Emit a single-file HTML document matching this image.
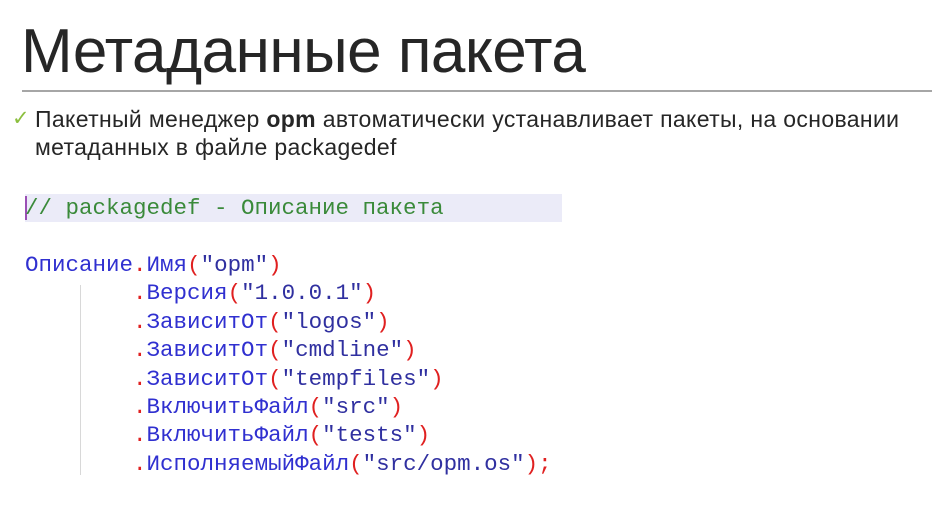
<!DOCTYPE html>
<html><head><meta charset="utf-8"><style>
body{margin:0;width:932px;height:510px;background:#fff;overflow:hidden;position:relative;font-family:"Liberation Sans","DejaVu Sans",sans-serif}
.t{position:absolute;left:21px;top:16px;font-size:62px;color:#262626;white-space:nowrap;letter-spacing:-0.5px}
.hr{position:absolute;left:22px;top:90px;width:910px;height:2px;background:#a6a6a6}
.b{position:absolute;left:35px;top:105px;font-size:23px;line-height:28px;color:#262626;width:890px;letter-spacing:0.35px}
.ck{position:absolute;left:12px;top:106px;color:#8cbf3f;font-size:21px}
.hl{position:absolute;left:25px;top:194px;width:537px;height:28px;background:#ebebf8}
.cur{position:absolute;left:25px;top:196px;width:2px;height:24px;background:#9b4fb5}
pre{position:absolute;left:25px;margin:0;font-family:"Liberation Mono","DejaVu Sans Mono",monospace;font-size:22.5px;line-height:28.4px;color:#3030d0}
.c{color:#3a8a3a}.s{color:#3030a0}.p{color:#e02020}.d{color:#e02020}
.vl{position:absolute;left:80px;top:285px;width:1px;height:190px;background:#d8d8d8}
</style></head><body>
<div class="t">Метаданные пакета</div>
<div class="hr"></div>
<div class="ck">✓</div>
<div class="b">Пакетный менеджер <b>opm</b> автоматически устанавливает пакеты, на основании метаданных в файле packagedef</div>
<div class="hl"></div><div class="cur"></div>
<pre style="top:194px"><span class="c">// packagedef - Описание пакета</span></pre>
<div class="vl"></div>
<pre style="top:251px">Описание<span class="d">.</span>Имя<span class="p">(</span><span class="s">"opm"</span><span class="p">)</span>
        <span class="d">.</span>Версия<span class="p">(</span><span class="s">"1.0.0.1"</span><span class="p">)</span>
        <span class="d">.</span>ЗависитОт<span class="p">(</span><span class="s">"logos"</span><span class="p">)</span>
        <span class="d">.</span>ЗависитОт<span class="p">(</span><span class="s">"cmdline"</span><span class="p">)</span>
        <span class="d">.</span>ЗависитОт<span class="p">(</span><span class="s">"tempfiles"</span><span class="p">)</span>
        <span class="d">.</span>ВключитьФайл<span class="p">(</span><span class="s">"src"</span><span class="p">)</span>
        <span class="d">.</span>ВключитьФайл<span class="p">(</span><span class="s">"tests"</span><span class="p">)</span>
        <span class="d">.</span>ИсполняемыйФайл<span class="p">(</span><span class="s">"src/opm.os"</span><span class="p">);</span></pre>
</body></html>
